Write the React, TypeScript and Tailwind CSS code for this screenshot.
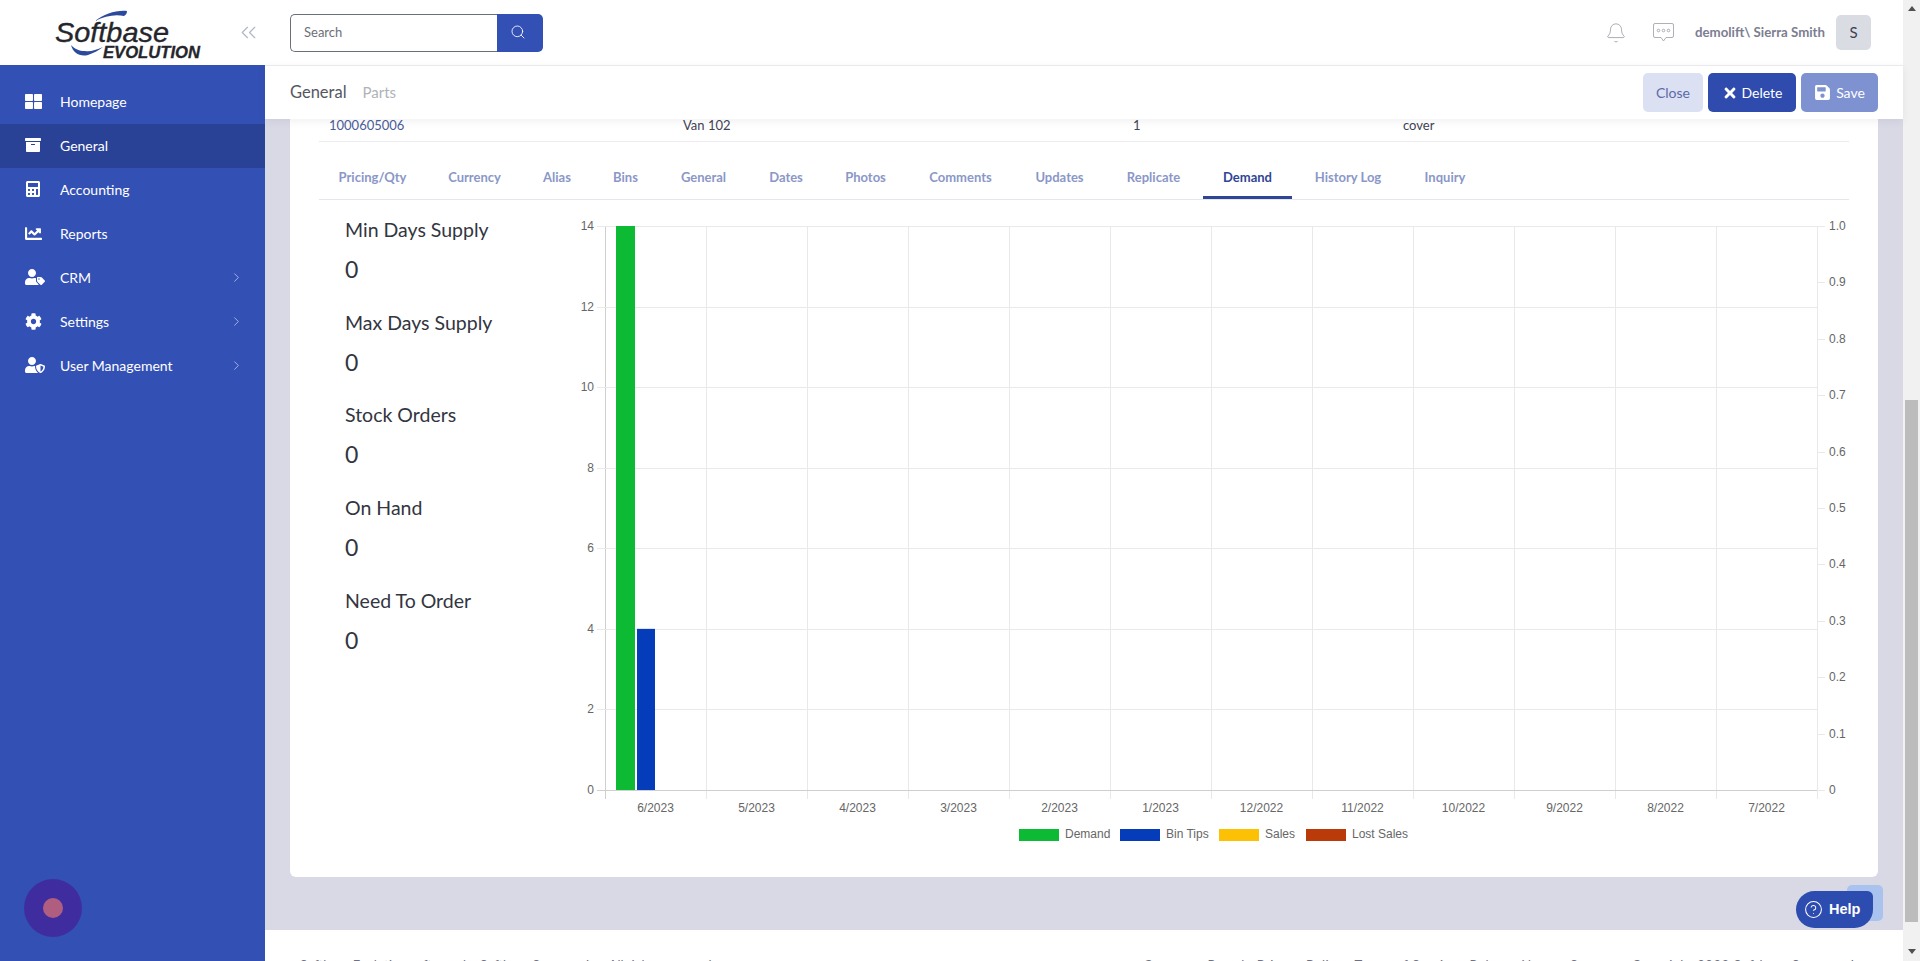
import { Bell, ChevronRight, ChevronsLeft, CircleHelp, Search } from 'lucide-react'
import { FaArchive, FaCalculator, FaChartLine, FaCog, FaSave, FaThLarge, FaTimes, FaUserShield, FaUserTag } from 'react-icons/fa'

const menu = [
  { label: 'Homepage', icon: FaThLarge, size: 17 },
  { label: 'General', icon: FaArchive, size: 16, active: true },
  { label: 'Accounting', icon: FaCalculator, size: 16 },
  { label: 'Reports', icon: FaChartLine, size: 17 },
  { label: 'CRM', icon: FaUserTag, size: 20, sub: true },
  { label: 'Settings', icon: FaCog, size: 17, sub: true },
  { label: 'User Management', icon: FaUserShield, size: 20, sub: true },
]

// widths keep the tab labels where the reference has them
const tabs = [
  { label: 'Pricing/Qty', w: 'w-[107px]' },
  { label: 'Currency', w: 'w-[93px]' },
  { label: 'Alias', w: 'w-[68px]' },
  { label: 'Bins', w: 'w-[65px]' },
  { label: 'General', w: 'w-[87px]' },
  { label: 'Dates', w: 'w-[74px]' },
  { label: 'Photos', w: 'w-[81px]' },
  { label: 'Comments', w: 'w-[105px]' },
  { label: 'Updates', w: 'w-[89px]' },
  { label: 'Replicate', w: 'w-[95px]' },
  { label: 'Demand', w: 'w-[89px]', active: true },
  { label: 'History Log', w: 'w-[108px]' },
  { label: 'Inquiry', w: 'w-[82px]' },
]

const stats = ['Min Days Supply', 'Max Days Supply', 'Stock Orders', 'On Hand', 'Need To Order']

const months = ['6/2023', '5/2023', '4/2023', '3/2023', '2/2023', '1/2023', '12/2022', '11/2022', '10/2022', '9/2022', '8/2022', '7/2022']

const legend = [
  { label: 'Demand', x: 1019, color: '#0cba33' },
  { label: 'Bin Tips', x: 1120, color: '#043cba' },
  { label: 'Sales', x: 1219, color: '#fcc005' },
  { label: 'Lost Sales', x: 1306, color: '#bb3a0a' },
]

// chart is drawn in page coordinates, hence the viewBox origin
const left = 605
const right = 1817
const top = 226
const bottom = 790
const yFor = (v: number) => bottom - (v / 14) * (bottom - top)

function DemandChart() {
  const colW = (right - left) / 12
  return (
    <svg width={1300} height={640} viewBox="570 215 1300 640" className="shrink-0" style={{ fontFamily: '"Liberation Sans", Arial, sans-serif' }}>
      {months.map((m, i) => (
        <line key={m} x1={left + colW * i + 0.5} x2={left + colW * i + 0.5} y1={top} y2={799} stroke="#e9e9e9" />
      ))}
      <line x1={right + 0.5} x2={right + 0.5} y1={top} y2={799} stroke="#e9e9e9" />
      <line x1={left + 0.5} x2={left + 0.5} y1={top} y2={799} stroke="#cfcfcf" />
      {[0, 2, 4, 6, 8, 10, 12, 14].map(v => (
        <g key={v}>
          <line x1={597} x2={right} y1={Math.round(yFor(v)) + 0.5} y2={Math.round(yFor(v)) + 0.5} stroke={v === 0 ? '#cfcfcf' : '#e9e9e9'} />
          <text x={594} y={yFor(v) + 4} textAnchor="end" fontSize={12} fill="#666">{v}</text>
        </g>
      ))}
      {[0, 0.1, 0.2, 0.3, 0.4, 0.5, 0.6, 0.7, 0.8, 0.9, 1].map(v => {
        const y = bottom - v * (bottom - top)
        return (
          <g key={v}>
            <line x1={right} x2={1825} y1={Math.round(y) + 0.5} y2={Math.round(y) + 0.5} stroke="#e9e9e9" />
            <text x={1829} y={y + 4} fontSize={12} fill="#666">{v === 0 ? '0' : v === 1 ? '1.0' : v.toFixed(1)}</text>
          </g>
        )
      })}
      <rect x={616} y={top} width={19} height={bottom - top} fill="#0cba33" />
      <rect x={637} y={yFor(4)} width={18} height={bottom - yFor(4)} fill="#043cba" />
      {months.map((m, i) => (
        <text key={m} x={left + colW * (i + 0.5)} y={812} textAnchor="middle" fontSize={12} fill="#666">{m}</text>
      ))}
      {legend.map(l => (
        <g key={l.label}>
          <rect x={l.x} y={829} width={40} height={12} fill={l.color} />
          <text x={l.x + 46} y={838} fontSize={12} fill="#666">{l.label}</text>
        </g>
      ))}
    </svg>
  )
}

function Logo() {
  return (
    <svg width={238} height={65} viewBox="0 0 238 65" className="shrink-0" style={{ fontFamily: '"Liberation Sans", Arial, sans-serif' }}>
      <path d="M95 21 C104 14 116 10 127 11 C127 13 126 15 124 16 C115 14 105 16 95 21 Z" fill="#2b4a9b" />
      <path d="M71 45 C73 53 80 57 88 55 C94 53 99 50 103 47 C96 50 90 52 85 51 C79 51 75 49 71 45 Z" fill="#2b4a9b" />
      <text x={55} y={42} fontSize={27} fontStyle="italic" fill="#25262b" stroke="#25262b" strokeWidth={0.35} textLength={114} lengthAdjust="spacingAndGlyphs">Softbase</text>
      <text x={103} y={58} fontSize={16} fontWeight={700} fontStyle="italic" fill="#25262b" stroke="#25262b" strokeWidth={0.3} textLength={97} lengthAdjust="spacingAndGlyphs">EVOLUTION</text>
    </svg>
  )
}

function ChatIcon() {
  return (
    <svg width={21} height={19} viewBox="0 0 21 19" fill="none" stroke="#9a9ca6" strokeWidth={0.8}>
      <path d="M2 .5h17a1.5 1.5 0 0 1 1.5 1.5v11a1.5 1.5 0 0 1-1.5 1.5h-6l-2.5 3.5-2.5-3.5H2A1.5 1.5 0 0 1 .5 13V2A1.5 1.5 0 0 1 2 .5Z" />
      <circle cx={5.5} cy={7.5} r={1.3} />
      <circle cx={10.5} cy={7.5} r={1.3} />
      <circle cx={15.5} cy={7.5} r={1.3} />
    </svg>
  )
}

export default function App() {
  return (
    <div className="relative flex h-screen w-screen overflow-hidden bg-white text-[14px] text-[#3f4254]" style={{ fontFamily: 'Lato, "Noto Sans", sans-serif' }}>
      {/* Sidebar */}
      <aside className="flex w-[265px] shrink-0 flex-col bg-[#3350b5]">
        <div className="flex h-[65px] items-center bg-white">
          <Logo />
          <ChevronsLeft size={25} strokeWidth={1.2} className="-ml-[2px] text-[#b4b8c6]" />
        </div>
        <nav className="pt-[15px]">
          {menu.map(item => (
            <div key={item.label} className={`flex h-[44px] items-center pb-[2px] pl-[25px] pr-[21px] text-white ${item.active ? 'bg-[#2a4296]' : ''}`}>
              <span className="flex w-[35px] items-center">
                <item.icon size={item.size} />
              </span>
              <span className="flex-1 text-[14px]">{item.label}</span>
              {item.sub && <ChevronRight size={15} strokeWidth={1.5} className="text-[#a9b6e2]" />}
            </div>
          ))}
        </nav>
      </aside>

      {/* Main column */}
      <div className="flex min-w-0 flex-1 flex-col">
        <header className="flex h-[66px] shrink-0 items-center border-b border-[#ececf1] pl-[25px] pr-[32px]">
          <div className="flex h-[38px] w-[253px]">
            <input
              placeholder="Search"
              className="h-full w-[207px] rounded-l-[5px] border border-r-0 border-[#6b7078] px-[13px] pb-[2px] text-[13px] outline-none placeholder:text-[#6b7078]"
            />
            <button className="flex w-[46px] items-center justify-center rounded-r-[5px] bg-[#3350b5] pb-[2px] pr-[5px] text-white">
              <Search size={16} strokeWidth={1.3} />
            </button>
          </div>
          <div className="ml-auto flex items-center">
            <Bell size={22} strokeWidth={0.8} className="text-[#8f919c]" />
            <span className="ml-[26px] flex"><ChatIcon /></span>
            <span className="ml-[21px] text-[13.25px] font-bold text-[#7b7d91]">demolift\ Sierra Smith</span>
            <span className="ml-[11px] flex h-[35px] w-[35px] items-center justify-center rounded-[5px] bg-[#d9dce3] text-[15px] text-[#3f4254]">S</span>
          </div>
        </header>

        <div className="relative z-10 flex h-[53px] shrink-0 items-center bg-white pl-[25px] pr-[25px] shadow-[0_2px_8px_rgba(60,60,90,0.08)]">
          <span className="text-[16.5px] text-[#55575f]">General</span>
          <span className="ml-[16px] text-[15px] text-[#b0b2ba]">Parts</span>
          <div className="ml-auto flex h-[39px] gap-[5px] text-[14px]">
            <button className="w-[60px] rounded-[5px] bg-[#dbe0f3] text-[#5a6aa8]">Close</button>
            <button className="flex w-[88px] items-center justify-center gap-[4px] rounded-[5px] bg-[#2f4bae] text-white">
              <FaTimes size={16} /> Delete
            </button>
            <button className="flex w-[77px] items-center justify-center gap-[5px] rounded-[5px] bg-[#7e91d1] text-white">
              <FaSave size={17} /> Save
            </button>
          </div>
        </div>

        <div className="flex-1 overflow-hidden bg-[#d8d9e5]">
          <div className="mx-[25px] h-[758px] rounded-b-[6px] bg-white px-[29px]">
            {/* Parts row, scrolled partly out of view */}
            <div className="flex h-[23px] border-b border-[#ebebf0] text-[13px] leading-[12px] text-[#3f4254]">
              <span className="w-[364px] pl-[10px] text-[#4a5c9a]">1000605006</span>
              <span className="w-[450px]">Van 102</span>
              <span className="w-[270px]">1</span>
              <span>cover</span>
            </div>

            <div className="mt-[15px] flex gap-[2px] border-b border-[#e6e6ee]">
              {tabs.map(t => (
                <div
                  key={t.label}
                  className={`flex h-[42px] items-center justify-center border-b-[3px] pt-[3px] text-[13px] font-bold ${t.w} ${t.active ? 'border-[#2f4595] text-[#2f4595]' : 'border-transparent text-[#8a97c8]'}`}
                >
                  {t.label}
                </div>
              ))}
            </div>

            <div className="mt-[15px] flex">
              <div className="w-[251px] shrink-0 pl-[26px]">
                {stats.map(s => (
                  <div key={s} className="h-[92.7px]">
                    <div className="text-[19.5px] leading-[30px] text-[#33353f]">{s}</div>
                    <div className="mt-[9px] text-[23px] leading-[30px] text-[#33353f]">0</div>
                  </div>
                ))}
              </div>
              <DemandChart />
            </div>
          </div>
          <div className="h-[53px]" />
          <footer className="flex h-[40px] justify-between bg-white pl-[35px] pr-[30px] pt-[26px] text-[13px] text-[#6f7180]">
            <span>Softbase Evolution software by Softbase Systems, Inc. All rights reserved.</span>
            <span className="tracking-[0.6px]">Customer Portal · Privacy Policy · Terms of Service · Release Notes · Support · Copyright 2023 Softbase Systems, Inc.</span>
          </footer>
        </div>
      </div>

      {/* Page scrollbar */}
      <div className="flex w-[17px] shrink-0 flex-col items-center bg-[#f1f1f1]">
        <div className="mt-[6px] h-0 w-0 border-x-[4px] border-b-[5px] border-x-transparent border-b-[#505050]" />
        <div className="mt-[389px] h-[522px] w-[13px] bg-[#bcbcbc]" />
        <div className="mt-[27px] h-0 w-0 border-x-[4px] border-t-[5px] border-x-transparent border-t-[#505050]" />
      </div>

      {/* Floating widgets */}
      <div className="absolute left-[24px] top-[879px] flex h-[58px] w-[58px] items-center justify-center rounded-full bg-[#3f2da0]">
        <div className="h-[20px] w-[20px] rounded-full bg-[#b05e80]" />
      </div>
      <div className="absolute left-[1847px] top-[885px] h-[36px] w-[36px] rounded-[5px] bg-[#a9c3ee]" />
      <button className="absolute left-[1796px] top-[891px] flex h-[37px] w-[77px] items-center gap-[6px] rounded-bl-[20px] rounded-br-[20px] rounded-tl-[20px] rounded-tr-[6px] bg-[#2c4cb0] pl-[8px] text-[14.5px] font-bold text-white" style={{ fontFamily: '"Liberation Sans", Arial, sans-serif' }}>
        <CircleHelp size={19} strokeWidth={1.3} /> Help
      </button>
    </div>
  )
}
